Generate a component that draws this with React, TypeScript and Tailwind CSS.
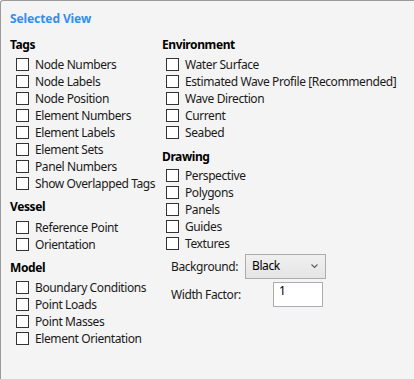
import React from 'react';

const TAGS = ['Node Numbers', 'Node Labels', 'Node Position', 'Element Numbers', 'Element Labels', 'Element Sets', 'Panel Numbers', 'Show Overlapped Tags'];
const VESSEL = ['Reference Point', 'Orientation'];
const MODEL = ['Boundary Conditions', 'Point Loads', 'Point Masses', 'Element Orientation'];
const ENVIRONMENT = ['Water Surface', 'Estimated Wave Profile [Recommended]', 'Wave Direction', 'Current', 'Seabed'];
const DRAWING = ['Perspective', 'Polygons', 'Panels', 'Guides', 'Textures'];

function CheckRow({ label, indent }: { label: string; indent: string }) {
    return (
        <label className={`flex items-center h-[17px] ${indent}`}>
            <span className="w-[13px] h-[13px] border border-[#333333] bg-white flex-shrink-0" />
            <span className="ml-[6px] text-[12px] tracking-[-0.4px] text-[#1a1a1a] whitespace-nowrap leading-none">{label}</span>
        </label>
    );
}

function Heading({ children, className = '' }: { children: React.ReactNode; className?: string }) {
    return <div className={`h-[16px] text-[12px] font-bold tracking-[-0.4px] text-black leading-[16px] ${className}`}>{children}</div>;
}

export default function App() {
    return (
        <div
            className="w-[414px] h-[379px] bg-[#f4f4f4] border-t border-l border-[#9a9a9a] rounded-tl-[3px] pl-[9px] pt-[10px] overflow-hidden"
            style={{ fontFamily: '"Noto Sans", "Open Sans", sans-serif' }}
        >
            <div className="h-[16px] text-[12px] font-bold text-[#2f8ff3] leading-[16px] tracking-[-0.1px]">Selected View</div>

            <div className="flex mt-[10px]">
                {/* Left column */}
                <div className="w-[152px] flex-shrink-0">
                    <Heading>Tags</Heading>
                    <div className="mt-[3px]">
                        {TAGS.map(t => <CheckRow key={t} label={t} indent="ml-[6px]" />)}
                    </div>
                    <Heading className="mt-[7px]">Vessel</Heading>
                    <div className="mt-[4px]">
                        {VESSEL.map(t => <CheckRow key={t} label={t} indent="ml-[6px]" />)}
                    </div>
                    <Heading className="mt-[7px]">Model</Heading>
                    <div className="mt-[3px]">
                        {MODEL.map(t => <CheckRow key={t} label={t} indent="ml-[6px]" />)}
                    </div>
                </div>

                {/* Right column */}
                <div className="flex-1">
                    <Heading>Environment</Heading>
                    <div className="mt-[3px]">
                        {ENVIRONMENT.map(t => <CheckRow key={t} label={t} indent="ml-[4px]" />)}
                    </div>
                    <Heading className="mt-[8px]">Drawing</Heading>
                    <div className="mt-[2px]">
                        {DRAWING.map(t => <CheckRow key={t} label={t} indent="ml-[4px]" />)}
                    </div>

                    <div className="flex items-center mt-[2px] ml-[9px]">
                        <span className="w-[74px] text-[12px] tracking-[-0.4px] text-[#1a1a1a]">Background:</span>
                        <div className="w-[81px] h-[25px] border border-[#acacac] bg-gradient-to-b from-[#f0f0f0] to-[#e5e5e5] flex items-center justify-between pl-[6px] pr-[7px]">
                            <span className="text-[12px] tracking-[-0.4px] text-black -mt-[2px]">Black</span>
                            <svg width="7" height="5" viewBox="0 0 7 5">
                                <polyline points="0.5,0.5 3.5,3.5 6.5,0.5" fill="none" stroke="#606060" strokeWidth="1.2" />
                            </svg>
                        </div>
                    </div>

                    <div className="flex items-center mt-[3px] ml-[9px]">
                        <span className="w-[102px] text-[12px] tracking-[-0.4px] text-[#1a1a1a]">Width Factor:</span>
                        <div className="w-[50px] h-[25px] border border-[#abadb3] bg-white pl-[5px] text-[12px] text-black leading-[16px]">1</div>
                    </div>
                </div>
            </div>
        </div>
    );
}
